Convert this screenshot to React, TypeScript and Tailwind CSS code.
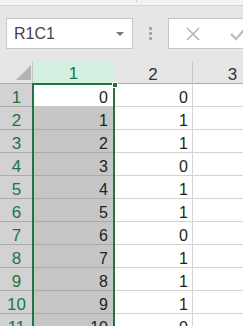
import { useState } from "react";

const col1 = [0, 1, 2, 3, 4, 5, 6, 7, 8, 9, 10];
const col2 = [0, 1, 1, 0, 1, 1, 0, 1, 1, 1, 0];

const App = () => {
  const [active] = useState(0);

  return (
    <div
      className="w-[243px] h-[326px] overflow-hidden bg-[#e6e6e6] text-[#222]"
      style={{ fontFamily: '"Liberation Sans", Arial, sans-serif' }}
    >
      {/* Top strip */}
      <div className="relative h-[6px] bg-[#f3f3f3] border-b border-[#d5d5d5]">
        <div className="absolute left-[136px] top-0 h-[2px] w-px bg-[#c8c8c8]" />
      </div>

      {/* Formula bar */}
      <div className="flex items-start h-[55px] pt-[12px] pl-[6px]">
        <div className="flex items-center justify-between w-[127px] h-[31px] bg-white border border-[#c6c6c6] pl-[7px] pr-[8px]">
          <span className="text-[16px] text-[#444]">R1C1</span>
          <span className="w-0 h-0 border-l-[4px] border-r-[4px] border-t-[4px] border-l-transparent border-r-transparent border-t-[#777]" />
        </div>
        <div className="flex flex-col gap-[2px] ml-[16px] mt-[9px]">
          <span className="w-[3px] h-[3px] bg-[#a6a6a6]" />
          <span className="w-[3px] h-[3px] bg-[#a6a6a6]" />
          <span className="w-[3px] h-[3px] bg-[#a6a6a6]" />
        </div>
        <div className="flex items-center gap-[30px] ml-[16px] h-[31px] flex-1 bg-white border border-[#c6c6c6] border-r-0 pl-[17px] overflow-hidden">
          <svg className="shrink-0" width="14" height="14" viewBox="0 0 14 14" fill="none" stroke="#b3b3b3" strokeWidth="1.5">
            <path d="M1 1 L13 13 M13 1 L1 13" />
          </svg>
          <svg className="shrink-0" width="16" height="14" viewBox="0 0 16 14" fill="none" stroke="#c0c0c0" strokeWidth="2.5">
            <path d="M1 7 L6 12 L15 2" />
          </svg>
        </div>
      </div>

      {/* Sheet */}
      <div className="relative overflow-hidden">
        {/* Column headers */}
        <div className="grid grid-cols-[33px_81px_79px_79px] h-[23px] border-b border-[#ababab]">
          <div className="relative border-r border-[#c6c6c6]">
            <svg className="absolute left-[16px] top-[4px]" width="15" height="15" viewBox="0 0 15 15">
              <path d="M15 0 L15 15 L0 15 Z" fill="#b4b4b4" />
            </svg>
          </div>
          <div className="flex items-center justify-center bg-[#d3f0e0] border-b-2 border-[#217346] text-[17px] text-[#217346] -mb-px">
            1
          </div>
          <div className="flex items-center justify-center border-r border-[#c6c6c6] text-[17px] text-[#333]">2</div>
          <div className="flex items-center justify-center text-[17px] text-[#333]">3</div>
        </div>

        {/* Rows */}
        {col1.map((v, i) => (
          <div key={i} className="grid grid-cols-[33px_81px_79px_79px] h-[23px] text-[16px] leading-none">
            <div className="flex items-end justify-center bg-[#d2d2d2] border-b border-[#ababab] text-[17px] text-[#217346]">
              {i + 1}
            </div>
            <div
              className={`flex items-end justify-end pr-[6px] border-b ${
                i === active ? "bg-white border-[#c6c6c6]" : "bg-[#c6c6c6] border-[#ababab]"
              }`}
            >
              {v}
            </div>
            <div className="flex items-end justify-end pr-[4px] bg-white border-b border-r border-[#d4d4d4]">
              {col2[i]}
            </div>
            <div className="bg-white border-b border-[#d4d4d4]" />
          </div>
        ))}

        {/* Selection border */}
        <div className="absolute left-[32px] top-[22px] w-[83px] h-[300px] border-2 border-[#217346]" />
        <div className="absolute left-[112px] top-[21px] w-[6px] h-[6px] bg-[#217346] border border-white" />
      </div>
    </div>
  );
};

export default App;
